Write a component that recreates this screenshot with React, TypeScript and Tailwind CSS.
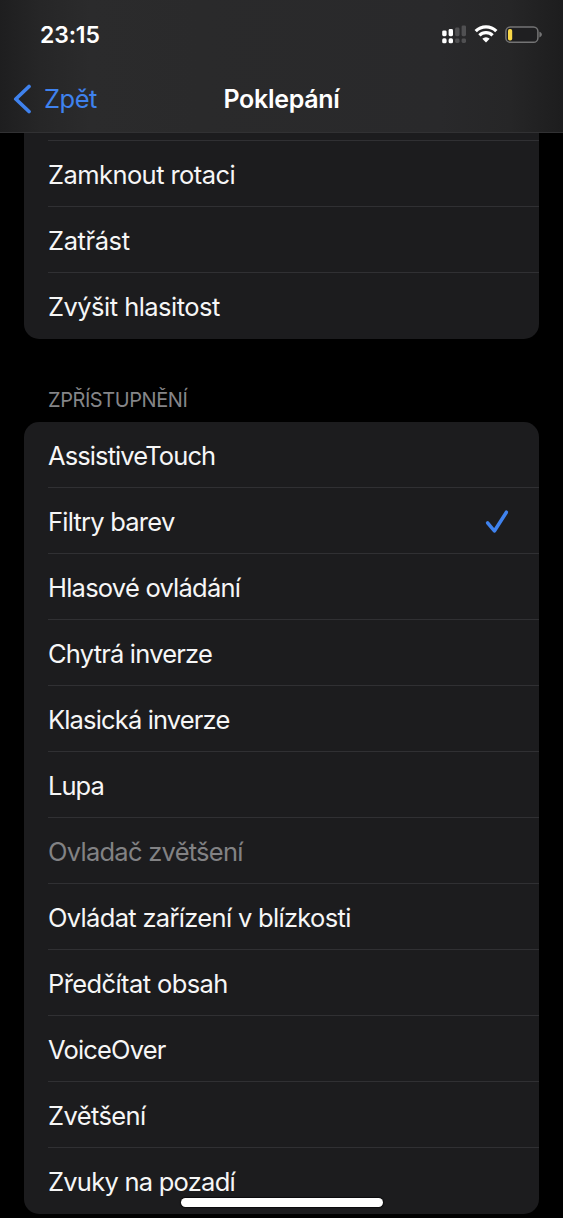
type Item = { label: string; tracking: string; checked?: boolean; disabled?: boolean };

const controls: Item[] = [
  { label: "Zamknout rotaci", tracking: "tracking-[-0.57px]" },
  { label: "Zatřást", tracking: "tracking-[-0.4px]" },
  { label: "Zvýšit hlasitost", tracking: "tracking-[-0.53px]" },
];

const accessibility: Item[] = [
  { label: "AssistiveTouch", tracking: "tracking-[-0.9px]" },
  { label: "Filtry barev", tracking: "tracking-[-0.77px]", checked: true },
  { label: "Hlasové ovládání", tracking: "tracking-[-0.77px]" },
  { label: "Chytrá inverze", tracking: "tracking-[-0.8px]" },
  { label: "Klasická inverze", tracking: "tracking-[-0.85px]" },
  { label: "Lupa", tracking: "tracking-[-0.95px]" },
  { label: "Ovladač zvětšení", tracking: "tracking-[-0.74px]", disabled: true },
  { label: "Ovládat zařízení v blízkosti", tracking: "tracking-[-0.68px]" },
  { label: "Předčítat obsah", tracking: "tracking-[-0.6px]" },
  { label: "VoiceOver", tracking: "tracking-[-0.83px]" },
  { label: "Zvětšení", tracking: "tracking-[-0.6px]" },
  { label: "Zvuky na pozadí", tracking: "tracking-[-0.75px]" },
];

function Row({ item, last }: { item: Item; last: boolean }) {
  return (
    <li
      className={`ml-6 flex h-[66px] items-center justify-between border-b pt-[3px] pr-[29px] ${
        last ? "border-transparent" : "border-[#303033]"
      }`}
    >
      <span
        className={`text-[25.5px] leading-8 whitespace-nowrap ${item.tracking} ${
          item.disabled ? "text-[#828284]" : "text-[#f6f6f6]"
        }`}
      >
        {item.label}
      </span>
      {item.checked && (
        <svg width="26" height="26" viewBox="0 0 26 26" fill="none" className="mb-[1px]">
          <path
            d="M3.6 13.8 10.4 22 22.4 3.2"
            stroke="#3f82ee"
            strokeWidth="3.5"
            strokeLinecap="round"
            strokeLinejoin="round"
          />
        </svg>
      )}
    </li>
  );
}

function Group({ items, className }: { items: Item[]; className: string }) {
  return (
    <ul className={`mx-6 bg-[#1c1c1e] ${className}`}>
      {items.map((item, i) => (
        <Row key={item.label} item={item} last={i === items.length - 1} />
      ))}
    </ul>
  );
}

function Signal() {
  return (
    <svg width="25" height="20" viewBox="0 0 25 20">
      <g fill="#fff">
        <rect x="0.2" y="5.4" width="4.4" height="5.8" rx="1.4" />
        <rect x="6.6" y="4" width="4.4" height="7.2" rx="1.4" />
        <rect x="0.2" y="13.3" width="4.4" height="5" rx="1.6" />
        <rect x="6.6" y="13.3" width="4.4" height="5" rx="1.6" />
      </g>
      <g fill="#505052">
        <rect x="13.1" y="2.6" width="4.4" height="8.6" rx="1.4" />
        <rect x="19.6" y="0.4" width="4.4" height="10.8" rx="1.4" />
        <rect x="13.1" y="13.6" width="4.4" height="4.4" rx="1.4" />
        <rect x="19.6" y="13.6" width="4.4" height="4.4" rx="1.4" />
      </g>
    </svg>
  );
}

function Wifi() {
  return (
    <svg width="24" height="20" viewBox="0 0 24 20" fill="none">
      <path d="M1.7 6.2a14.6 14.6 0 0 1 20.6 0" stroke="#fff" strokeWidth="3.3" />
      <path d="M5.4 10.4a9.3 9.3 0 0 1 13.2 0" stroke="#fff" strokeWidth="3.1" />
      <path d="M12 17.6 8.3 13.8a5.2 5.2 0 0 1 7.4 0Z" fill="#fff" />
    </svg>
  );
}

function Battery() {
  return (
    <svg width="38" height="18" viewBox="0 0 38 18">
      <rect x="0.9" y="0.9" width="32" height="15.4" rx="4.4" fill="#1f1f21" stroke="#747475" strokeWidth="1.5" />
      <rect x="3" y="3" width="4.2" height="11.4" rx="1.7" fill="#f9d748" />
      <path d="M34.4 5.8c1.8.6 2.5 1.6 2.5 2.8s-.7 2.2-2.5 2.8Z" fill="#747475" />
    </svg>
  );
}

export default function App() {
  return (
    <div className="relative flex h-[1218px] w-[563px] flex-col overflow-hidden bg-black font-[Inter,'Liberation_Sans',sans-serif]">
      <header className="flex h-[133px] shrink-0 flex-col border-b border-[#313133] bg-[linear-gradient(90deg,#1e1e1f_0,#262627_40px,#2b2b2c_90px,#2a2a2b_200px,#29292b_440px,#262627_510px,#1d1d1e_563px)]">
        <div className="flex h-[68px] items-center justify-between pt-[2px] pr-[20px] pl-[40px]">
          <span className="text-[23px] leading-7 font-semibold tracking-[-0.15px] text-white">23:15</span>
          <div className="flex items-center gap-[7px]">
            <Signal />
            <Wifi />
            <Battery />
          </div>
        </div>
        <nav className="grid h-[62px] grid-cols-3 items-center">
          <button className="flex items-center pl-[13px] text-[#3f82ee]">
            <svg width="19" height="30" viewBox="0 0 19 30" fill="none">
              <path
                d="M16 2.5 2.8 15 16 27.5"
                stroke="currentColor"
                strokeWidth="3.7"
                strokeLinecap="round"
                strokeLinejoin="round"
              />
            </svg>
            <span className="ml-[12px] text-[25.5px] leading-8 tracking-[-0.5px]">Zpět</span>
          </button>
          <h1 className="text-center text-[25px] leading-8 font-semibold tracking-[-0.3px] text-white">Poklepání</h1>
        </nav>
      </header>
      <main className="flex flex-col">
        <div className="mx-6 h-2 bg-[#1c1c1e] pl-6">
          <div className="h-full border-b border-[#303033]" />
        </div>
        <Group items={controls} className="rounded-b-[15px]" />
        <h2 className="mt-[49px] mb-[10px] ml-[48px] text-[20px] leading-6 tracking-[-0.43px] text-[#858588]">
          ZPŘÍSTUPNĚNÍ
        </h2>
        <Group items={accessibility} className="rounded-[15px]" />
      </main>
      <div className="absolute bottom-[11px] left-[181px] h-[9px] w-[202px] rounded-full bg-white shadow-[0_0_1px_1px_#0c0c0d]" />
    </div>
  );
}
